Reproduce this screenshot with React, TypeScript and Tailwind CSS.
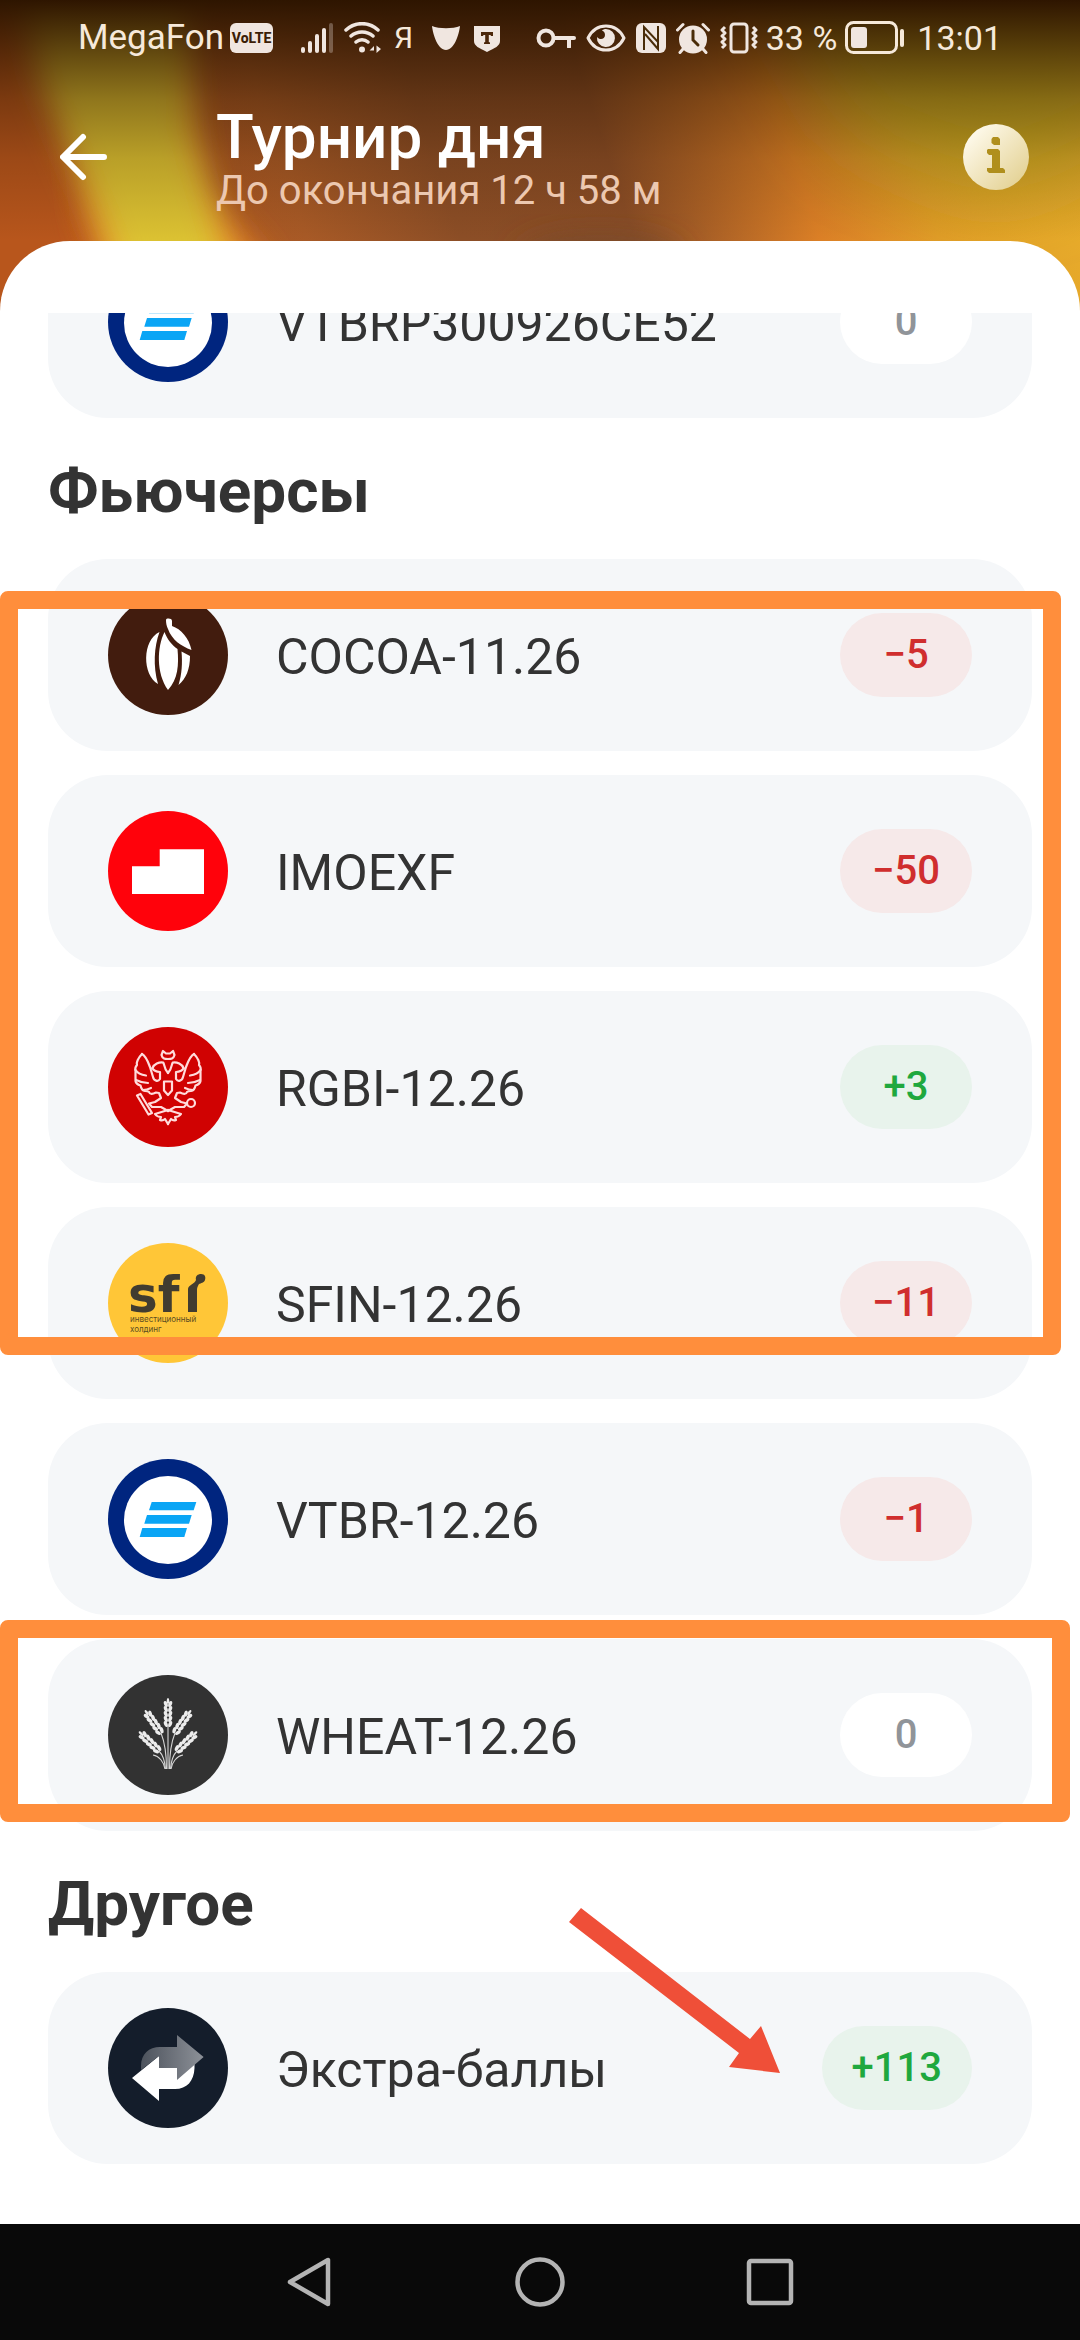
import type { ReactNode } from 'react';

type Score = 'plus' | 'minus' | 'zero';

const scoreStyles: Record<Score, string> = {
  plus: 'bg-[#e8f3ec] text-[#1fa83e]',
  minus: 'bg-[#f6e9e9] text-[#d02e2e]',
  zero: 'bg-white text-[#909499]'
};

function VtbLogo() {
  return (
    <svg viewBox="0 0 120 120" className="size-[120px]">
      <circle cx="60" cy="60" r="60" fill="#00257f" />
      <circle cx="60" cy="61" r="44" fill="#fff" />
      <g fill="#0aa5f5">
        <path d="M43.7 43H88.3L85.7 51.3H41Z" />
        <path d="M39 56H83.7L81 64.7H36.3Z" />
        <path d="M34.3 69H79L76.3 78H31.7Z" />
      </g>
    </svg>
  );
}

function CocoaLogo() {
  return (
    <svg viewBox="0 0 120 120" className="size-[120px]">
      <circle cx="60" cy="60" r="60" fill="#421c0e" />
      <g fill="#fff">
        <path d="M58 25C58 23 64 23 64 26L64 31C73 34 81 43 83.5 55C73 51 64 45 60 34C58.500 31 58 28 58 25Z" />
        <path d="M56.500 37C49 52 48 78 60 95C70 84 71 70 69.500 54C64 50 59 44 56.500 37Z" />
        <path d="M51.500 37C34 45 34 80 50 89C45 71 46 52 51.500 37Z" />
        <path d="M73.500 56.500L82 61C82 74 78 84 70.500 90C74 79 74.500 68 73.500 56.500Z" />
      </g>
    </svg>
  );
}

function MoexLogo() {
  return (
    <svg viewBox="0 0 120 120" className="size-[120px]">
      <circle cx="60" cy="60" r="60" fill="#ff020b" />
      <path d="M24 55.300H51.700V38.300H96V83H24Z" fill="#fff" />
    </svg>
  );
}

function EagleWing() {
  return (
    <>
      <path d="M34 27C30 31 28 36 29 38C27 40 27 42 27.500 44V54C28 57 31 58 32.500 58.500C33 61 34 63.500 37 64C39 64 40 64 41 65C42 68 45 67 48 65.500L51 66L53 71L47 75L41 76.500L44 80H53L60 84" />
      <path d="M34 27C38 29 40 35 42 40L45 50C46 54 50 55 52 52V45C48 45 45 43 44.500 41C46 37 51 35 55 35.500C57 37 55 40 60 46" />
      <path d="M27.500 43C30 47 34 48 38 48.500M28 53C32 55 36 56 40 56M35 63C38 63 41 62 43 61" />
      <path d="M60 83L47 87C49 90 51 90 53 90L52 93C54 94 56 93 57 92L60 97" />
    </>
  );
}

function EagleLogo() {
  return (
    <svg viewBox="0 0 120 120" className="size-[120px]">
      <circle cx="60" cy="60" r="60" fill="#d00202" />
      <g fill="none" stroke="#ffdcdc" strokeWidth="2.200" strokeLinejoin="round" strokeLinecap="round">
        <EagleWing />
        <g transform="matrix(-1 0 0 1 120 0)">
          <EagleWing />
        </g>
        <path d="M55 24L53.500 28C54.500 32 57 32 60 32C63 32 65.500 32 66.500 28L65 24L62 26.500H58Z" />
        <path d="M56 54.500H64V63.500L60 68L56 63.500Z" />
        <path d="M29 68.500L32.500 67L44 86L40.500 87.500Z" />
        <circle cx="83" cy="76" r="4" fill="#d00202" />
      </g>
    </svg>
  );
}

function SfiLogo() {
  return (
    <svg viewBox="0 0 120 120" className="size-[120px]">
      <circle cx="60" cy="60" r="60" fill="#ffc637" />
      <text x="20" y="69" fontSize="50" fontWeight="700" fill="#413c30" className="font-['DejaVu_Sans']">
        sf
      </text>
      {/* matchstick */}
      <path d="M80 69V46C80 42 87 41 88 37C87 33 90 31 93 31C97 31 98 34 97 37C96 40 93 40 91 41C90 43 89 44 89 47V69Z" fill="#413c30" />
      <text x="22" y="79" fontSize="8" fill="#5c4c22" className="font-[Inter]">
        инвестиционный
      </text>
      <text x="22" y="89" fontSize="8" fill="#5c4c22" className="font-[Inter]">
        холдинг
      </text>
    </svg>
  );
}

const grains = [0, 5, 10, 15, 20];

function WheatEar({ x, y, angle }: { x: number; y: number; angle: number }) {
  return (
    <g transform={`translate(${x} ${y}) rotate(${angle})`}>
      {grains.map((g) => (
        <g key={g}>
          <ellipse cx="-2.2" cy={-g - 2} rx="1.8" ry="3.2" transform={`rotate(-20 -2.2 ${-g - 2})`} />
          <ellipse cx="2.2" cy={-g - 2} rx="1.8" ry="3.2" transform={`rotate(20 2.2 ${-g - 2})`} />
        </g>
      ))}
      <ellipse cx="0" cy="-25" rx="1.3" ry="3" />
    </g>
  );
}

function WheatLogo() {
  return (
    <svg viewBox="0 0 120 120" className="size-[120px]">
      <circle cx="60" cy="60" r="60" fill="#323232" />
      <g fill="#ececec">
        <WheatEar x={60} y={51} angle={0} />
        <WheatEar x={53} y={58} angle={-35} />
        <WheatEar x={67} y={58} angle={35} />
        <WheatEar x={51} y={76} angle={-46} />
        <WheatEar x={69} y={76} angle={46} />
      </g>
      <g fill="none" stroke="#d6d6d6" strokeWidth="1.100">
        <path d="M60 94V50M58.500 94C58.500 80 57 68 53 58M61.500 94C61.500 80 63 68 67 58" />
        <path d="M57.500 94C57 88 55 80 51 76M62.500 94C63 88 65 80 69 76" />
        <path d="M57 94C56 87 51 81 45 80M63 94C64 87 69 81 75 80" />
      </g>
    </svg>
  );
}

function ExtraLogo() {
  return (
    <svg viewBox="0 0 120 120" className="size-[120px]">
      <defs>
        <linearGradient id="extra" x1="0" y1="0" x2="1" y2="0">
          <stop offset="0" stopColor="#4c525c" />
          <stop offset="1" stopColor="#8d9198" />
        </linearGradient>
      </defs>
      <circle cx="60" cy="60" r="60" fill="#141d2b" />
      <path d="M24 70L51 48V60H70L86.500 55V60C86 73 79 81 67 81H51V93Z" fill="#fff" />
      <path d="M33 62V58C33 46 41 39 52 39H69V27L95.600 49L69 72V60H51V48Z" fill="url(#extra)" />
    </svg>
  );
}

const futures = [
  { name: 'COCOA-11.26', value: '−5', score: 'minus' as Score, logo: <CocoaLogo /> },
  { name: 'IMOEXF', value: '−50', score: 'minus' as Score, logo: <MoexLogo /> },
  { name: 'RGBI-12.26', value: '+3', score: 'plus' as Score, logo: <EagleLogo /> },
  { name: 'SFIN-12.26', value: '−11', score: 'minus' as Score, logo: <SfiLogo /> },
  { name: 'VTBR-12.26', value: '−1', score: 'minus' as Score, logo: <VtbLogo /> },
  { name: 'WHEAT-12.26', value: '0', score: 'zero' as Score, logo: <WheatLogo /> }
];

function Row({ name, value, score, logo }: { name: string; value: string; score: Score; logo: ReactNode }) {
  return (
    <li className="flex h-48 items-center gap-12 rounded-[60px] bg-[#f5f7f9] px-[60px]">
      {logo}
      <span className="flex-1 pt-1 text-[50px] leading-[60px] text-[#333333]">{name}</span>
      <span
        className={`flex h-[84px] min-w-[132px] items-center justify-center rounded-full px-[30px] text-[40px] font-medium ${scoreStyles[score]}`}>
        {value}
      </span>
    </li>
  );
}

function Heading({ children }: { children: ReactNode }) {
  return (
    <h2 className="flex h-[141px] items-center pt-1 text-[62px] leading-[72px] font-bold text-[#333333]">
      {children}
    </h2>
  );
}

function HeaderBackground() {
  return (
    <svg
      viewBox="0 0 1080 330"
      preserveAspectRatio="none"
      className="absolute inset-x-0 top-0 h-[330px] w-full"
      aria-hidden="true">
      <defs>
        <filter id="soft" x="-50%" y="-50%" width="200%" height="200%">
          <feGaussianBlur stdDeviation="16" />
        </filter>
        <filter id="softer" x="-50%" y="-50%" width="200%" height="200%">
          <feGaussianBlur stdDeviation="40" />
        </filter>
        <linearGradient id="base" x1="0" y1="0.100" x2="1" y2="0">
          <stop offset="0" stopColor="#b8561c" />
          <stop offset="0.220" stopColor="#a85a26" />
          <stop offset="0.360" stopColor="#8c4e26" />
          <stop offset="0.520" stopColor="#8a4d26" />
          <stop offset="0.600" stopColor="#b06426" />
          <stop offset="0.690" stopColor="#dc8026" />
          <stop offset="0.800" stopColor="#e09c28" />
          <stop offset="1" stopColor="#eab22c" />
        </linearGradient>
        <linearGradient id="shade" x1="0" y1="0" x2="0" y2="1">
          <stop offset="0" stopColor="#2e1500" />
          <stop offset="0.180" stopColor="#2e1500" stopOpacity="0.660" />
          <stop offset="0.300" stopColor="#2e1500" stopOpacity="0.440" />
          <stop offset="0.480" stopColor="#2e1500" stopOpacity="0.200" />
          <stop offset="0.730" stopColor="#2e1500" stopOpacity="0" />
        </linearGradient>
      </defs>
      <rect width="1080" height="330" fill="url(#base)" />
      <path d="M740 -60L850 130L1000 190L1140 120V-60Z" fill="#c9ae24" filter="url(#softer)" />
      <path d="M60 -60H160L200 190L262 260L300 400H160L90 220Z" fill="#e58428" filter="url(#soft)" />
      <path d="M10 -60H185L190 130L228 260L240 400H165L100 220L40 80Z" fill="#dcc232" filter="url(#soft)" />
      <ellipse cx="600" cy="262" rx="80" ry="24" fill="#76492a" filter="url(#soft)" />
      <rect width="1080" height="330" fill="url(#shade)" />
    </svg>
  );
}

function StatusBar() {
  return (
    <div className="relative flex h-[72px] items-center pt-1 pr-[78px] pl-[78px] text-[34px] leading-[40px] text-[#f6e9da]">
      <span className="text-[35px]">MegaFon</span>
      <svg viewBox="0 0 44 30" className="ml-1.5 h-[30px] w-11" fill="#f0e6e0">
        <rect width="43" height="30" rx="6" />
        <text x="21.5" y="20" fontSize="14" fontWeight="800" textAnchor="middle" fill="#3c1e06" className="font-[Roboto]">
          VoLTE
        </text>
      </svg>
      <svg viewBox="0 0 34 32" className="ml-[26px] h-8 w-[34px]" fill="#f0e6e0">
        <rect x="1" y="25" width="4" height="6" rx="2" />
        <rect x="8" y="19" width="4" height="12" rx="2" />
        <rect x="15" y="12" width="4" height="19" rx="2" />
        <rect x="22" y="6" width="4" height="25" rx="2" />
        <rect x="29" y="1" width="4" height="30" rx="2" opacity="0.3" />
      </svg>
      <svg viewBox="0 0 38 32" className="ml-2.5 h-8 w-[38px]" fill="none" stroke="#f0e6e0" strokeWidth="3.500" strokeLinecap="round">
        <path d="M2 8C11 -0.500 25 -0.500 34 8M7 14C13 8.500 23 8.500 29 14M12 20C15.500 17 20.500 17 24 20" />
        <circle cx="18" cy="27.500" r="3" fill="#f0e6e0" stroke="none" />
        <path d="M30 24L25.500 28.500H30ZM32.500 31V23.500L37 27Z" fill="#f0e6e0" stroke="none" />
      </svg>
      <span className="ml-3 text-[30px]">Я</span>
      <svg viewBox="0 0 30 26" className="ml-[18px] h-[26px] w-[30px]" fill="#f0e6e0">
        <path d="M1 1C8 4 22 4 29 1C28 10 23 25 15 25C7 25 2 10 1 1Z" />
      </svg>
      <svg viewBox="0 0 28 28" className="ml-3 h-7 w-7">
        <path d="M1 2H27V17C27 22 22 24 14 28C6 24 1 22 1 17Z" fill="#f0e6e0" />
        <path d="M8 8H20V12H18L17.500 11H15.800V18L17 18.500V20H11V18.500L12.200 18V11H10.500L10 12H8Z" fill="#4c270b" />
      </svg>
      <div className="ml-auto flex items-center">
        <svg viewBox="0 0 40 20" className="h-5 w-10" fill="none" stroke="#f0e6e0" strokeWidth="4">
          <circle cx="10" cy="10" r="7.500" />
          <path d="M18 10H38M33 10V19" strokeLinecap="round" />
        </svg>
        <svg viewBox="0 0 40 28" className="ml-2.5 h-7 w-10" fill="none" stroke="#f0e6e0" strokeWidth="3">
          <path d="M2 14C10 -2 30 -2 38 14C30 30 10 30 2 14Z" strokeLinejoin="round" />
          <path d="M20 5A9 9 0 1 1 11 13C13 16 19 16 19 11C19 8 17 7 16 6.500C17 5.500 18.500 5 20 5Z" fill="#f0e6e0" stroke="none" />
        </svg>
        <svg viewBox="0 0 30 32" className="ml-2.5 h-8 w-[30px]">
          <rect y="1" width="30" height="30" rx="6" fill="#f0e6e0" />
          <path d="M8 28V5L22 20V12M9 12L22 27V4" fill="none" stroke="#4a2c08" strokeWidth="2" />
        </svg>
        <svg viewBox="0 0 34 32" className="ml-2.5 h-8 w-[34px]">
          <circle cx="17" cy="17.500" r="14" fill="#f0e6e0" />
          <path d="M1.500 8L7 2.500M32.500 8L27 2.500M7 27L4 30.500M27 27L30 30.500" stroke="#f0e6e0" strokeWidth="3" strokeLinecap="round" />
          <path d="M17 9V18L22 23" fill="none" stroke="#4a2c08" strokeWidth="3" strokeLinecap="round" />
        </svg>
        <svg viewBox="0 0 38 32" className="ml-2.5 h-8 w-[38px]" fill="none" stroke="#f0e6e0" strokeWidth="3">
          <rect x="11" y="2" width="16" height="28" rx="3" />
          <path d="M5 5L2 8L5 11L2 14L5 17L2 20L5 23L2 26M33 5L36 8L33 11L36 14L33 17L36 20L33 23L36 26" strokeLinejoin="round" />
        </svg>
        <span className="ml-2">33 %</span>
        <svg viewBox="0 0 60 34" className="ml-2 h-[34px] w-[60px]">
          <rect x="1.500" y="1.500" width="50" height="30" rx="7" fill="none" stroke="#f6e9da" strokeWidth="3" />
          <rect x="6" y="6" width="16" height="21" rx="3" fill="#f0e6e0" />
          <rect x="55" y="8" width="4" height="18" rx="2" fill="#f6e9da" />
        </svg>
        <span className="ml-3">13:01</span>
      </div>
    </div>
  );
}

function Header() {
  return (
    <header className="relative">
      <StatusBar />
      <div className="flex h-[169px] items-center pr-[51px] pl-[60px]">
        <button type="button" aria-label="Назад" className="flex size-12 items-center justify-center">
          <svg viewBox="0 0 48 48" className="size-12" fill="none" stroke="#fff" strokeWidth="6" strokeLinecap="round" strokeLinejoin="round">
            <path d="M44 24H4M23 4L3 24L23 44" />
          </svg>
        </button>
        <div className="ml-[108px] flex-1 pt-1">
          <h1 className="text-[62px] leading-[64px] font-medium text-white">Турнир дня</h1>
          <p className="text-[40px] leading-[44px] text-[#ecc8b0]">До окончания 12 ч 58 м</p>
        </div>
        <button type="button" aria-label="Информация" className="size-[66px]">
          <svg viewBox="0 0 66 66" className="size-[66px]">
            <defs>
              <linearGradient id="info" x1="0" y1="0" x2="1" y2="1">
                <stop offset="0.100" stopColor="#fffbee" />
                <stop offset="1" stopColor="#e0cc88" />
              </linearGradient>
            </defs>
            <circle cx="33" cy="33" r="33" fill="url(#info)" />
            <g fill="#b08f1d">
              <path d="M30 13H35L37 15V21H31L28.500 19V15Z" />
              <path d="M25 25H35L37 27V44H40L42 46V49H26L24 47V44H29V31H26L24 29V26Z" />
            </g>
          </svg>
        </button>
      </div>
    </header>
  );
}

function NavBar() {
  return (
    <nav className="flex h-[116px] items-center justify-center bg-[#090909]">
      <button type="button" aria-label="Назад" className="flex w-[230px] justify-center">
        <svg viewBox="0 0 50 52" className="h-[52px] w-[50px]" fill="none" stroke="#b4b4b4" strokeWidth="4.500" strokeLinejoin="round">
          <path d="M43 4V48L5 26Z" />
        </svg>
      </button>
      <button type="button" aria-label="Домой" className="flex w-[230px] justify-center">
        <svg viewBox="0 0 52 52" className="size-[52px]" fill="none" stroke="#b4b4b4" strokeWidth="4.500">
          <circle cx="26" cy="26" r="22.500" />
        </svg>
      </button>
      <button type="button" aria-label="Недавние" className="flex w-[230px] justify-center">
        <svg viewBox="0 0 52 52" className="size-[52px]" fill="none" stroke="#b4b4b4" strokeWidth="4.500">
          <rect x="5" y="5" width="42" height="42" rx="2" />
        </svg>
      </button>
    </nav>
  );
}

function App() {
  return (
    <div className="relative flex min-h-screen flex-col bg-white font-[Roboto,sans-serif]">
      <HeaderBackground />
      <Header />
      <main className="relative flex-1 rounded-t-[70px] bg-white pt-[72px]">
        <div className="overflow-hidden px-12 pb-[60px]">
          <ul className="-mt-[87px]">
            <Row name="VTBRP300926CE52" value="0" score="zero" logo={<VtbLogo />} />
          </ul>
          <section className="relative">
            <Heading>Фьючерсы</Heading>
            <ul className="flex flex-col gap-6">
              {futures.map((item) => (
                <Row key={item.name} {...item} />
              ))}
            </ul>
            {/* highlighted groups */}
            <div className="absolute top-[173px] -right-[29px] -left-12 h-[764px] rounded-lg border-[18px] border-[#ff8e3c]" />
            <div className="absolute -right-[38px] bottom-[9px] -left-12 h-[202px] rounded-lg border-[18px] border-[#ff8e3c]" />
          </section>
          <section className="relative">
            <Heading>Другое</Heading>
            <ul>
              <Row name="Экстра-баллы" value="+113" score="plus" logo={<ExtraLogo />} />
            </ul>
            <svg viewBox="0 0 212 166" className="absolute top-[76px] right-[251px] h-[166px] w-[212px]" fill="#ef4f38">
              <path d="M0 15L12 1L181 132L192 119L211 166L160 160L170 146Z" />
            </svg>
          </section>
        </div>
      </main>
      <NavBar />
    </div>
  );
}

export default App;
